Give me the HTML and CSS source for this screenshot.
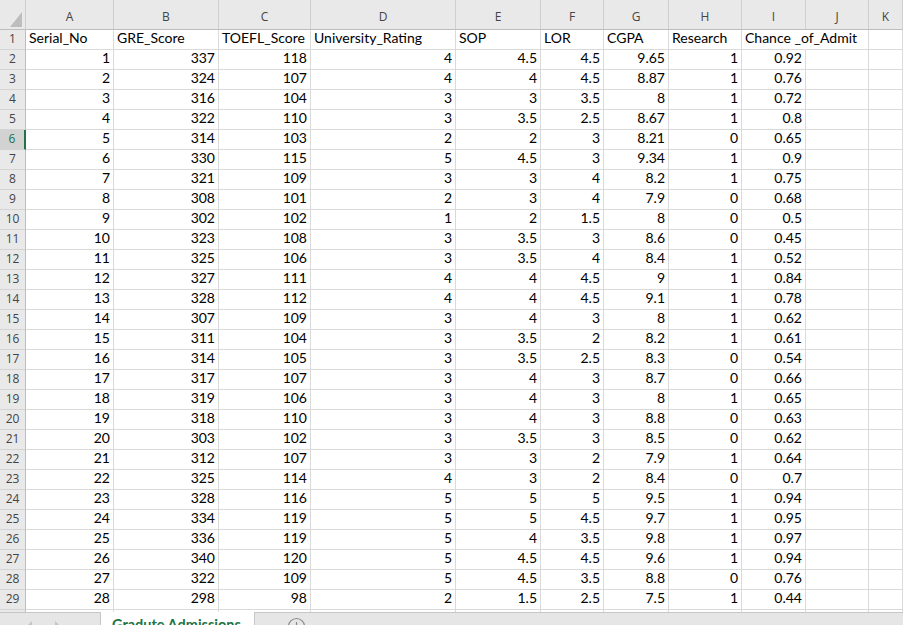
FILE: index.html
```html
<!DOCTYPE html>
<html>
<head>
<meta charset="utf-8">
<link rel="stylesheet" href="styles.css">
</head>
<body>
<div class="sheet">
  <div class="row head">
    <div class="corner"><svg width="26" height="29" viewBox="0 0 26 29"><polygon points="22,12 22,27 10,27" fill="#bdbdbd"/></svg></div>
    <div class="ch">A</div><div class="ch">B</div><div class="ch">C</div><div class="ch">D</div><div class="ch">E</div><div class="ch">F</div><div class="ch">G</div><div class="ch">H</div><div class="ch">I</div><div class="ch">J</div><div class="ch">K</div>
  </div>
  <div class="row"><div class="rh">1</div><div class="c">Serial_No</div><div class="c">GRE_Score</div><div class="c">TOEFL_Score</div><div class="c">University_Rating</div><div class="c">SOP</div><div class="c">LOR</div><div class="c">CGPA</div><div class="c">Research</div><div class="c spill">Chance _of_Admit</div><div class="c"></div><div class="c"></div></div>
  <div class="row"><div class="rh">2</div><div class="c n">1</div><div class="c n">337</div><div class="c n">118</div><div class="c n">4</div><div class="c n">4.5</div><div class="c n">4.5</div><div class="c n">9.65</div><div class="c n">1</div><div class="c n">0.92</div><div class="c"></div><div class="c"></div></div>
  <div class="row"><div class="rh">3</div><div class="c n">2</div><div class="c n">324</div><div class="c n">107</div><div class="c n">4</div><div class="c n">4</div><div class="c n">4.5</div><div class="c n">8.87</div><div class="c n">1</div><div class="c n">0.76</div><div class="c"></div><div class="c"></div></div>
  <div class="row"><div class="rh">4</div><div class="c n">3</div><div class="c n">316</div><div class="c n">104</div><div class="c n">3</div><div class="c n">3</div><div class="c n">3.5</div><div class="c n">8</div><div class="c n">1</div><div class="c n">0.72</div><div class="c"></div><div class="c"></div></div>
  <div class="row"><div class="rh">5</div><div class="c n">4</div><div class="c n">322</div><div class="c n">110</div><div class="c n">3</div><div class="c n">3.5</div><div class="c n">2.5</div><div class="c n">8.67</div><div class="c n">1</div><div class="c n">0.8</div><div class="c"></div><div class="c"></div></div>
  <div class="row"><div class="rh sel">6</div><div class="c n">5</div><div class="c n">314</div><div class="c n">103</div><div class="c n">2</div><div class="c n">2</div><div class="c n">3</div><div class="c n">8.21</div><div class="c n">0</div><div class="c n">0.65</div><div class="c"></div><div class="c"></div></div>
  <div class="row"><div class="rh">7</div><div class="c n">6</div><div class="c n">330</div><div class="c n">115</div><div class="c n">5</div><div class="c n">4.5</div><div class="c n">3</div><div class="c n">9.34</div><div class="c n">1</div><div class="c n">0.9</div><div class="c"></div><div class="c"></div></div>
  <div class="row"><div class="rh">8</div><div class="c n">7</div><div class="c n">321</div><div class="c n">109</div><div class="c n">3</div><div class="c n">3</div><div class="c n">4</div><div class="c n">8.2</div><div class="c n">1</div><div class="c n">0.75</div><div class="c"></div><div class="c"></div></div>
  <div class="row"><div class="rh">9</div><div class="c n">8</div><div class="c n">308</div><div class="c n">101</div><div class="c n">2</div><div class="c n">3</div><div class="c n">4</div><div class="c n">7.9</div><div class="c n">0</div><div class="c n">0.68</div><div class="c"></div><div class="c"></div></div>
  <div class="row"><div class="rh">10</div><div class="c n">9</div><div class="c n">302</div><div class="c n">102</div><div class="c n">1</div><div class="c n">2</div><div class="c n">1.5</div><div class="c n">8</div><div class="c n">0</div><div class="c n">0.5</div><div class="c"></div><div class="c"></div></div>
  <div class="row"><div class="rh">11</div><div class="c n">10</div><div class="c n">323</div><div class="c n">108</div><div class="c n">3</div><div class="c n">3.5</div><div class="c n">3</div><div class="c n">8.6</div><div class="c n">0</div><div class="c n">0.45</div><div class="c"></div><div class="c"></div></div>
  <div class="row"><div class="rh">12</div><div class="c n">11</div><div class="c n">325</div><div class="c n">106</div><div class="c n">3</div><div class="c n">3.5</div><div class="c n">4</div><div class="c n">8.4</div><div class="c n">1</div><div class="c n">0.52</div><div class="c"></div><div class="c"></div></div>
  <div class="row"><div class="rh">13</div><div class="c n">12</div><div class="c n">327</div><div class="c n">111</div><div class="c n">4</div><div class="c n">4</div><div class="c n">4.5</div><div class="c n">9</div><div class="c n">1</div><div class="c n">0.84</div><div class="c"></div><div class="c"></div></div>
  <div class="row"><div class="rh">14</div><div class="c n">13</div><div class="c n">328</div><div class="c n">112</div><div class="c n">4</div><div class="c n">4</div><div class="c n">4.5</div><div class="c n">9.1</div><div class="c n">1</div><div class="c n">0.78</div><div class="c"></div><div class="c"></div></div>
  <div class="row"><div class="rh">15</div><div class="c n">14</div><div class="c n">307</div><div class="c n">109</div><div class="c n">3</div><div class="c n">4</div><div class="c n">3</div><div class="c n">8</div><div class="c n">1</div><div class="c n">0.62</div><div class="c"></div><div class="c"></div></div>
  <div class="row"><div class="rh">16</div><div class="c n">15</div><div class="c n">311</div><div class="c n">104</div><div class="c n">3</div><div class="c n">3.5</div><div class="c n">2</div><div class="c n">8.2</div><div class="c n">1</div><div class="c n">0.61</div><div class="c"></div><div class="c"></div></div>
  <div class="row"><div class="rh">17</div><div class="c n">16</div><div class="c n">314</div><div class="c n">105</div><div class="c n">3</div><div class="c n">3.5</div><div class="c n">2.5</div><div class="c n">8.3</div><div class="c n">0</div><div class="c n">0.54</div><div class="c"></div><div class="c"></div></div>
  <div class="row"><div class="rh">18</div><div class="c n">17</div><div class="c n">317</div><div class="c n">107</div><div class="c n">3</div><div class="c n">4</div><div class="c n">3</div><div class="c n">8.7</div><div class="c n">0</div><div class="c n">0.66</div><div class="c"></div><div class="c"></div></div>
  <div class="row"><div class="rh">19</div><div class="c n">18</div><div class="c n">319</div><div class="c n">106</div><div class="c n">3</div><div class="c n">4</div><div class="c n">3</div><div class="c n">8</div><div class="c n">1</div><div class="c n">0.65</div><div class="c"></div><div class="c"></div></div>
  <div class="row"><div class="rh">20</div><div class="c n">19</div><div class="c n">318</div><div class="c n">110</div><div class="c n">3</div><div class="c n">4</div><div class="c n">3</div><div class="c n">8.8</div><div class="c n">0</div><div class="c n">0.63</div><div class="c"></div><div class="c"></div></div>
  <div class="row"><div class="rh">21</div><div class="c n">20</div><div class="c n">303</div><div class="c n">102</div><div class="c n">3</div><div class="c n">3.5</div><div class="c n">3</div><div class="c n">8.5</div><div class="c n">0</div><div class="c n">0.62</div><div class="c"></div><div class="c"></div></div>
  <div class="row"><div class="rh">22</div><div class="c n">21</div><div class="c n">312</div><div class="c n">107</div><div class="c n">3</div><div class="c n">3</div><div class="c n">2</div><div class="c n">7.9</div><div class="c n">1</div><div class="c n">0.64</div><div class="c"></div><div class="c"></div></div>
  <div class="row"><div class="rh">23</div><div class="c n">22</div><div class="c n">325</div><div class="c n">114</div><div class="c n">4</div><div class="c n">3</div><div class="c n">2</div><div class="c n">8.4</div><div class="c n">0</div><div class="c n">0.7</div><div class="c"></div><div class="c"></div></div>
  <div class="row"><div class="rh">24</div><div class="c n">23</div><div class="c n">328</div><div class="c n">116</div><div class="c n">5</div><div class="c n">5</div><div class="c n">5</div><div class="c n">9.5</div><div class="c n">1</div><div class="c n">0.94</div><div class="c"></div><div class="c"></div></div>
  <div class="row"><div class="rh">25</div><div class="c n">24</div><div class="c n">334</div><div class="c n">119</div><div class="c n">5</div><div class="c n">5</div><div class="c n">4.5</div><div class="c n">9.7</div><div class="c n">1</div><div class="c n">0.95</div><div class="c"></div><div class="c"></div></div>
  <div class="row"><div class="rh">26</div><div class="c n">25</div><div class="c n">336</div><div class="c n">119</div><div class="c n">5</div><div class="c n">4</div><div class="c n">3.5</div><div class="c n">9.8</div><div class="c n">1</div><div class="c n">0.97</div><div class="c"></div><div class="c"></div></div>
  <div class="row"><div class="rh">27</div><div class="c n">26</div><div class="c n">340</div><div class="c n">120</div><div class="c n">5</div><div class="c n">4.5</div><div class="c n">4.5</div><div class="c n">9.6</div><div class="c n">1</div><div class="c n">0.94</div><div class="c"></div><div class="c"></div></div>
  <div class="row"><div class="rh">28</div><div class="c n">27</div><div class="c n">322</div><div class="c n">109</div><div class="c n">5</div><div class="c n">4.5</div><div class="c n">3.5</div><div class="c n">8.8</div><div class="c n">0</div><div class="c n">0.76</div><div class="c"></div><div class="c"></div></div>
  <div class="row"><div class="rh">29</div><div class="c n">28</div><div class="c n">298</div><div class="c n">98</div><div class="c n">2</div><div class="c n">1.5</div><div class="c n">2.5</div><div class="c n">7.5</div><div class="c n">1</div><div class="c n">0.44</div><div class="c"></div><div class="c"></div></div>
  <div class="row"><div class="rh"></div><div class="c"></div><div class="c"></div><div class="c"></div><div class="c"></div><div class="c"></div><div class="c"></div><div class="c"></div><div class="c"></div><div class="c"></div><div class="c"></div><div class="c"></div></div>
</div>
<div class="tabs">
  <div class="nav"><svg width="100" height="20" viewBox="0 0 100 20"><polygon points="26,11 32,5 32,17" fill="#c4c4c4"/><polygon points="61,11 55,5 55,17" fill="#c4c4c4"/></svg></div>
  <div class="tab">Gradute Admissions</div>
  <svg class="plus" width="20" height="20" viewBox="0 0 20 20"><circle cx="9.5" cy="9.5" r="8" fill="none" stroke="#8a8a8a" stroke-width="1.2"/><line x1="9.5" y1="5" x2="9.5" y2="14" stroke="#8a8a8a" stroke-width="1.2"/><line x1="5" y1="9.5" x2="14" y2="9.5" stroke="#8a8a8a" stroke-width="1.2"/></svg>
</div>
</body>
</html>
```
FILE: styles.css
```css
html, body {
  margin: 0;
  padding: 0;
  background: #ffffff;
}
body {
  width: 903px;
  height: 625px;
  overflow: hidden;
  font-family: Lato, "Liberation Sans", sans-serif;
}
.sheet {
  height: 612px;
  overflow: hidden;
}
.row {
  display: grid;
  grid-template-columns: 26px 88px 105px 92px 145px 85px 63px 65px 73px 64px 63px 1fr;
  height: 20px;
}
.row.head {
  height: 30px;
}
.corner, .ch {
  box-sizing: border-box;
  background: #e9e9e9;
  border-right: 1px solid #cfcfcf;
  border-bottom: 1px solid #bdbdbd;
  height: 30px;
}
.corner svg {
  display: block;
}
.ch {
  font-family: "Open Sans", "Noto Sans", sans-serif;
  font-size: 12px;
  line-height: 16px;
  padding-top: 9px;
  color: #444444;
  text-align: center;
}
.rh {
  box-sizing: border-box;
  height: 20px;
  background: #e9e9e9;
  border-right: 1px solid #bdbdbd;
  border-bottom: 1px solid #d4d4d4;
  font-family: "Open Sans", "Noto Sans", sans-serif;
  font-size: 12px;
  line-height: 17px;
  color: #444444;
  text-align: center;
}
.rh.sel {
  background: #d2d2d2;
  color: #217346;
  border-right: 2px solid #217346;
}
.c {
  box-sizing: border-box;
  height: 20px;
  border-right: 1px solid #dadada;
  border-bottom: 1px solid #dadada;
  padding: 0 3px;
  font-size: 14px;
  line-height: 16px;
  color: #000000;
  white-space: nowrap;
  overflow: hidden;
}
.c.n {
  text-align: right;
}
.c.spill {
  overflow: visible;
  border-right-color: transparent;
  position: relative;
  z-index: 1;
}
.tabs {
  display: flex;
  align-items: flex-start;
  height: 40px;
  background: #e6e6e6;
  border-top: 1px solid #c6c6c6;
}
.nav {
  width: 100px;
  height: 30px;
}
.nav svg {
  display: block;
  margin-top: 3px;
}
.tab {
  box-sizing: border-box;
  width: 155px;
  height: 32px;
  margin-top: -1px;
  background: #ffffff;
  border-left: 1px solid #c6c6c6;
  border-right: 1px solid #c6c6c6;
  padding: 5px 0 0 11px;
  font-size: 14.5px;
  font-weight: bold;
  line-height: 16px;
  color: #217346;
  white-space: nowrap;
}
.plus {
  display: block;
  margin-left: 32px;
  margin-top: 4px;
}
```
